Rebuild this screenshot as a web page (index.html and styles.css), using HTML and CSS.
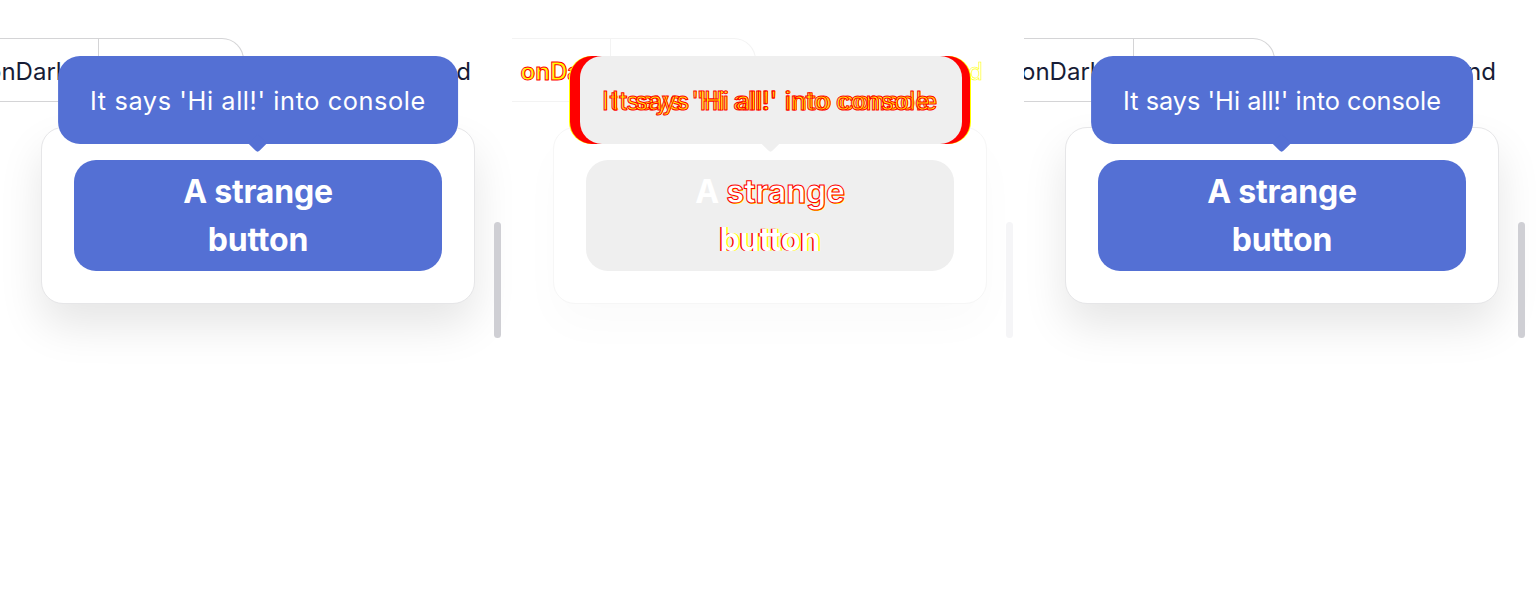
FILE: index.html
```html
<!DOCTYPE html>
<html lang="en">
<head>
<meta charset="utf-8">
<title>Tooltip visual diff</title>
<link rel="stylesheet" href="styles.css">
</head>
<body>
<div class="strip">

  <section class="panel panel-expected">
    <div class="toolbar">
      <div class="seg">
        <div class="cell cell-a"><span>Icon onDark</span></div>
        <div class="cell cell-b"></div>
      </div>
      <div class="check"></div>
      <div class="label"><span>Background</span></div>
    </div>
    <div class="card">
      <div class="tip tip-wide">It says 'Hi all!' into console</div>
      <div class="btn"><span class="btn-text">A strange<br>button</span></div>
    </div>
    <div class="scroll"></div>
  </section>

  <section class="panel panel-diff">
    <div class="toolbar">
      <div class="seg">
        <div class="cell cell-a"><span>onDa</span></div>
        <div class="cell cell-b"></div>
      </div>
      <div class="check"></div>
      <div class="label"><span>Background</span></div>
    </div>
    <div class="card">
      <div class="dtip">
        <div class="dtip-inner"></div>
        <div class="dtext dtext-a">It says 'Hi all!' into console</div>
        <div class="dtext dtext-b">It says 'Hi all!' into console</div>
      </div>
      <div class="btn"><span class="btn-text">A <span class="d-red">strange</span><br><span class="d-edge">button</span></span></div>
    </div>
    <div class="scroll"></div>
  </section>

  <section class="panel panel-actual">
    <div class="toolbar">
      <div class="seg">
        <div class="cell cell-a"><span>Icon onDark</span></div>
        <div class="cell cell-b"></div>
      </div>
      <div class="check"></div>
      <div class="label"><span>Background</span></div>
    </div>
    <div class="card">
      <div class="tip">It says 'Hi all!' into console</div>
      <div class="btn"><span class="btn-text">A strange<br>button</span></div>
    </div>
    <div class="scroll"></div>
  </section>

</div>
</body>
</html>
```

FILE: styles.css
```css
* { box-sizing: border-box; }

html, body {
  margin: 0;
  padding: 0;
  background: #ffffff;
  font-family: Inter, "Noto Sans", "Liberation Sans", sans-serif;
}

.strip {
  display: flex;
  width: 1536px;
  height: 600px;
  overflow: hidden;
}

.panel {
  position: relative;
  width: 512px;
  height: 600px;
  flex: none;
  overflow: hidden;
  display: flex;
  flex-direction: column;
  align-items: flex-start;
}

/* ---------- toolbar ---------- */
.toolbar {
  margin-top: 38px;
  height: 64px;
  display: flex;
  align-items: center;
  color: #171c36;
  font-size: 24px;
}

.seg {
  display: flex;
  height: 64px;
  border: 1px solid #d4d4d6;
  border-left: none;
  border-radius: 0 22px 22px 0;
}

.cell {
  height: 100%;
  display: flex;
  align-items: center;
  justify-content: flex-end;
  overflow: hidden;
  white-space: nowrap;
  padding-top: 2px;
}

.cell-a {
  width: 99px;
  padding-right: 29px;
  border-right: 1px solid #d4d4d6;
}
.cell-b { width: 144px; }

.check {
  width: 28px;
  height: 28px;
  margin-left: 27px;
  margin-top: -1px;
  border-radius: 7px;
  background: #5470d4;
}

.label {
  width: 172px;
  display: flex;
  justify-content: flex-end;
  white-space: nowrap;
  overflow: hidden;
  padding-top: 2px;
}

/* ---------- card ---------- */
.card {
  position: relative;
  margin: 25px 0 0 41px;
  width: 434px;
  padding: 32px;
  border: 1px solid #e6e6e8;
  border-radius: 22px;
  background: #ffffff;
  box-shadow: 0 22px 44px rgba(0, 0, 0, 0.10);
}

.btn {
  height: 111px;
  border-radius: 22px;
  background: #5470d4;
  color: #ffffff;
  font-weight: 700;
  font-size: 32px;
  line-height: 48px;
  letter-spacing: -0.2px;
  display: flex;
  align-items: center;
  justify-content: center;
  text-align: center;
}
.btn-text { display: block; }

/* ---------- tooltip ---------- */
.tip {
  position: absolute;
  top: -72px;
  left: 50%;
  transform: translateX(-50%);
  height: 88px;
  padding: 0 32px;
  border-radius: 22px;
  background: #5470d4;
  color: #ffffff;
  font-size: 25.3px;
  white-space: nowrap;
  display: flex;
  align-items: center;
  z-index: 2;
}
.tip::after {
  content: "";
  position: absolute;
  left: calc(50% - 6.5px);
  bottom: -6px;
  width: 13px;
  height: 13px;
  background: #5470d4;
  border-radius: 0 0 3px 0;
  transform: rotate(45deg);
}
.tip-wide { letter-spacing: 0.6px; }

/* ---------- scrollbar ---------- */
.scroll {
  position: absolute;
  left: 494px;
  top: 222px;
  width: 7px;
  height: 116px;
  border-radius: 4px;
  background: #cfcfd4;
}

/* ---------- actual panel offsets ---------- */
.panel-actual .cell-a { width: 110px; padding-right: 30px; }
.panel-actual .cell-b { width: 140px; }
.panel-actual .check { margin-left: 26px; }
.panel-actual .label { width: 167px; }

/* ---------- diff panel ---------- */
.panel-diff .seg,
.panel-diff .cell-a { border-color: #f3f3f3; }
.panel-diff .cell-a span {
  color: transparent;
  -webkit-text-stroke: 1px #ff0000;
  text-shadow: 1px 0 #ffff00;
  font-weight: 600;
}
.panel-diff .label span {
  color: transparent;
  -webkit-text-stroke: 0.6px #ffff00;
}
.panel-diff .check { background: transparent; }
.panel-diff .card {
  border-color: #f6f6f6;
  box-shadow: 0 22px 44px rgba(0, 0, 0, 0.018);
}
.panel-diff .btn { background: #efefef; }
.panel-diff .scroll { background: #f5f5f7; }

.d-red {
  color: #ffffff;
  -webkit-text-stroke: 1px #ff0000;
  text-shadow: 1px 1px #ffff00;
}
.d-edge {
  color: #ffffff;
  text-shadow: -1.5px 0 #ff0000, 1.5px 0 #ffff00;
}

.dtip {
  position: absolute;
  top: -72px;
  left: 50%;
  width: 400px;
  margin-left: -200px;
  height: 88px;
  border-radius: 22px;
  background: #ff0000;
  box-shadow: -1px 0 #ffff00, 1px 0 #ffff00;
  z-index: 2;
}
.dtip::after {
  content: "";
  position: absolute;
  left: calc(50% - 6.5px);
  bottom: -6px;
  width: 13px;
  height: 13px;
  background: #efefef;
  border-radius: 0 0 3px 0;
  transform: rotate(45deg);
}
.dtip-inner {
  position: absolute;
  top: 0;
  left: 10px;
  width: 382px;
  height: 88px;
  border-radius: 22px;
  background: #efefef;
}
.dtext {
  position: absolute;
  top: 0;
  height: 88px;
  display: flex;
  align-items: center;
  white-space: nowrap;
  font-size: 25.3px;
  color: transparent;
  -webkit-text-stroke: 1px #ff0000;
  text-shadow: 1px 0 #ffff00;
}
.dtext-a { left: 32px; letter-spacing: 0.6px; }
.dtext-b { left: 42px; }
```
